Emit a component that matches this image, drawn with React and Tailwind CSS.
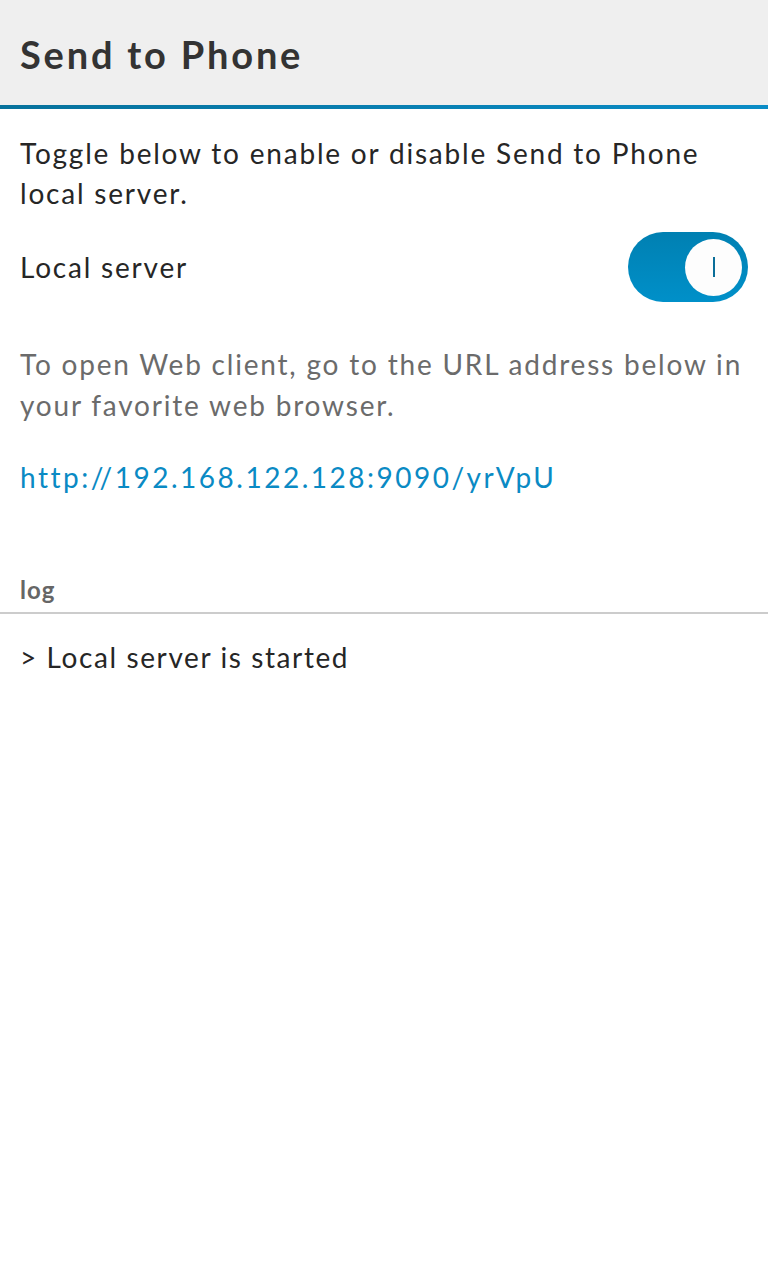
import React, { useState } from "react";

const App = () => {
  const [on, setOn] = useState(true);

  return (
    <div className="min-h-[1280px] w-[768px] bg-white text-[#262626] font-['Lato','Open_Sans',sans-serif]">
      {/* Title bar */}
      <div className="h-[105px] bg-[#efefef] px-5 flex items-center">
        <h1 className="text-[38px] font-bold text-[#333333] tracking-[2.8px] pt-1">Send to Phone</h1>
      </div>
      <div className="h-[4px] bg-gradient-to-r from-[#07729c] to-[#0a8cc6]" />

      <div className="px-5 pt-[24px]">
        <p className="text-[28px] leading-[40px] tracking-[1.8px]">
          Toggle below to enable or disable Send to Phone local server.
        </p>

        {/* Toggle row */}
        <div className="flex items-center justify-between mt-[19px]">
          <span className="text-[28px] tracking-[1.8px]">Local server</span>
          <button
            onClick={() => setOn(!on)}
            className={`w-[120px] h-[70px] rounded-full flex items-center px-[6px] bg-gradient-to-b from-[#0080b2] to-[#0090c9] ${on ? "justify-end" : "justify-start"}`}
          >
            <span className="w-[57px] h-[57px] rounded-full bg-[#fdfdfd] flex items-center justify-center">
              <span className="w-[2px] h-[20px] bg-[#0a6e99]" />
            </span>
          </button>
        </div>

        <p className="text-[28px] leading-[41px] tracking-[1.8px] text-[#6b6b6b] mt-[42px]">
          To open Web client, go to the URL address below in your favorite web browser.
        </p>
        <p className="text-[28px] tracking-[2.5px] text-[#0a8ac4] mt-[30px]">http://192.168.122.128:9090/yrVpU</p>
      </div>

      {/* Log */}
      <div className="mt-[74px]">
        <div className="px-5 text-[24px] font-bold text-[#666666] tracking-[1px] pb-[4px]">log</div>
        <div className="h-[2px] bg-[#cccccc]" />
        <div className="px-5 pt-[22px] text-[28px] tracking-[1.6px]">&gt; Local server is started</div>
      </div>
    </div>
  );
};

export default App;
